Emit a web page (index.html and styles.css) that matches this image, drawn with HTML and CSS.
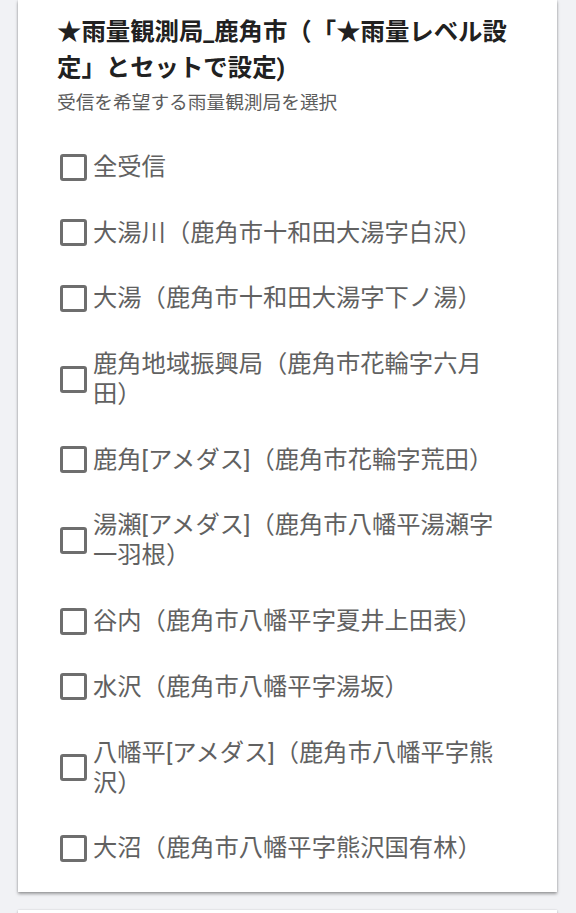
FILE: index.html
```html
<!DOCTYPE html>
<html lang="ja">
<head>
<meta charset="utf-8">
<title>雨量観測局</title>
<link rel="stylesheet" href="styles.css">
</head>
<body>
<div class="card">
  <h2 class="title">★雨量観測局_鹿角市（「★雨量レベル設定」とセットで設定)</h2>
  <p class="subtitle">受信を希望する雨量観測局を選択</p>
  <ul class="options">
    <li class="option"><span class="box"></span><span class="label">全受信</span></li>
    <li class="option"><span class="box"></span><span class="label">大湯川（鹿角市十和田大湯字白沢）</span></li>
    <li class="option"><span class="box"></span><span class="label">大湯（鹿角市十和田大湯字下ノ湯）</span></li>
    <li class="option"><span class="box"></span><span class="label">鹿角地域振興局（鹿角市花輪字六月田）</span></li>
    <li class="option"><span class="box"></span><span class="label">鹿角[アメダス]（鹿角市花輪字荒田）</span></li>
    <li class="option"><span class="box"></span><span class="label">湯瀬[アメダス]（鹿角市八幡平湯瀬字一羽根）</span></li>
    <li class="option"><span class="box"></span><span class="label">谷内（鹿角市八幡平字夏井上田表）</span></li>
    <li class="option"><span class="box"></span><span class="label">水沢（鹿角市八幡平字湯坂）</span></li>
    <li class="option"><span class="box"></span><span class="label">八幡平[アメダス]（鹿角市八幡平字熊沢）</span></li>
    <li class="option"><span class="box"></span><span class="label">大沼（鹿角市八幡平字熊沢国有林）</span></li>
  </ul>
</div>
<div class="card next"></div>
</body>
</html>
```
FILE: styles.css
```css
html, body {
  margin: 0;
  padding: 0;
  background: #f1f2f5;
}
body {
  font-family: Roboto, "Noto Sans CJK JP", sans-serif;
  text-spacing-trim: space-all;
}
.card {
  background: #ffffff;
  margin: 0 19px 0 18px;
  padding: 14px 43px 29px 39px;
  box-shadow: 0 2px 3px rgba(0, 0, 0, 0.35), 0 0 2px rgba(0, 0, 0, 0.15);
}
.card.next {
  margin-top: 18px;
  height: 3px;
  padding: 0;
}
.title {
  margin: 0;
  font-size: 24.4px;
  font-weight: 700;
  line-height: 36px;
  color: #212121;
}
.subtitle {
  margin: 3px 0 0;
  font-size: 18.7px;
  line-height: 28px;
  color: #5c5c5c;
}
.options {
  list-style: none;
  margin: 35px 0 0;
  padding: 0;
  display: flex;
  flex-direction: column;
  row-gap: 35.7px;
}
.option {
  display: flex;
  align-items: center;
}
.box {
  flex: none;
  box-sizing: border-box;
  width: 27px;
  height: 27px;
  margin-left: 3px;
  margin-right: 6px;
  border: 3px solid #6e6e6e;
  border-radius: 3px;
  background: #fff;
}
.label {
  font-size: 24.3px;
  line-height: 30px;
  color: #616161;
}
```
